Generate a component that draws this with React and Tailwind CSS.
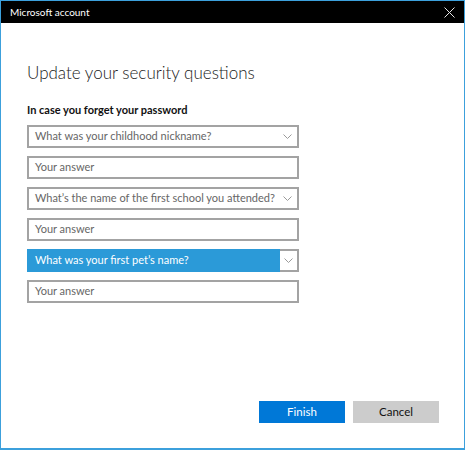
import React from 'react';

// Thin chevron used by the dropdowns
const Chevron = () => (
  <svg width="9" height="5" viewBox="0 0 9 5" fill="none" stroke="#9a9a9a" strokeWidth="1">
    <path d="M0.5 0.5 L4.5 4.5 L8.5 0.5" />
  </svg>
);

const Select = ({ label, active }) => (
  <div
    className={`flex h-[23px] w-[272px] items-stretch ${
      active ? 'bg-[#2b9ad8]' : 'border-2 border-[#a3a3a3] bg-white'
    }`}
  >
    <div
      className={`flex flex-1 items-center whitespace-nowrap text-[11px] ${
        active ? 'pl-[8px] text-white' : 'pl-[6px] text-[#666666]'
      }`}
    >
      {label}
    </div>
    <div
      className={`flex w-[19px] items-center justify-center ${
        active ? 'border-2 border-l-0 border-[#a3a3a3] bg-white' : ''
      }`}
    >
      <Chevron />
    </div>
  </div>
);

const AnswerBox = () => (
  <div className="flex h-[23px] w-[272px] items-center border-2 border-[#a3a3a3] bg-white pl-[6px] text-[11px] text-[#666666]">
    Your answer
  </div>
);

export default function App() {
  const questions = [
    { label: 'What was your childhood nickname?' },
    { label: 'What’s the name of the first school you attended?' },
    { label: 'What was your first pet’s name?', active: true },
  ];

  return (
    <div
      className="flex h-[450px] w-[465px] flex-col border-x border-b-2 border-t border-[#3ca0dc] bg-white"
      style={{ fontFamily: 'Lato, "Noto Sans", sans-serif' }}
    >
      {/* Title bar */}
      <div className="flex h-[22px] items-center justify-between bg-black pl-[9px] pr-[9px] text-[10px] text-white">
        <span>Microsoft account</span>
        <svg width="11" height="11" viewBox="0 0 11 11" stroke="#e6e6e6" strokeWidth="1">
          <path d="M0.5 0.5 L10.5 10.5 M10.5 0.5 L0.5 10.5" />
        </svg>
      </div>

      <div className="flex flex-1 flex-col pl-[26px]">
        <h1 className="mt-[37px] text-[17px] font-light leading-[26px] text-[#1a1a1a]">
          Update your security questions
        </h1>
        <p className="mt-[16px] text-[11px] font-bold leading-[16px] text-[#111111]">
          In case you forget your password
        </p>

        <div className="mt-[7px] flex flex-col gap-[8px]">
          {questions.map((q) => (
            <React.Fragment key={q.label}>
              <Select label={q.label} active={q.active} />
              <AnswerBox />
            </React.Fragment>
          ))}
        </div>

        <div className="mt-auto mb-[25px] flex gap-[8px] self-end pr-[25px]">
          <button className="h-[22px] w-[86px] bg-[#0078d7] text-[11.5px] text-white">Finish</button>
          <button className="h-[22px] w-[86px] bg-[#cccccc] text-[11.5px] text-[#111111]">Cancel</button>
        </div>
      </div>
    </div>
  );
}
